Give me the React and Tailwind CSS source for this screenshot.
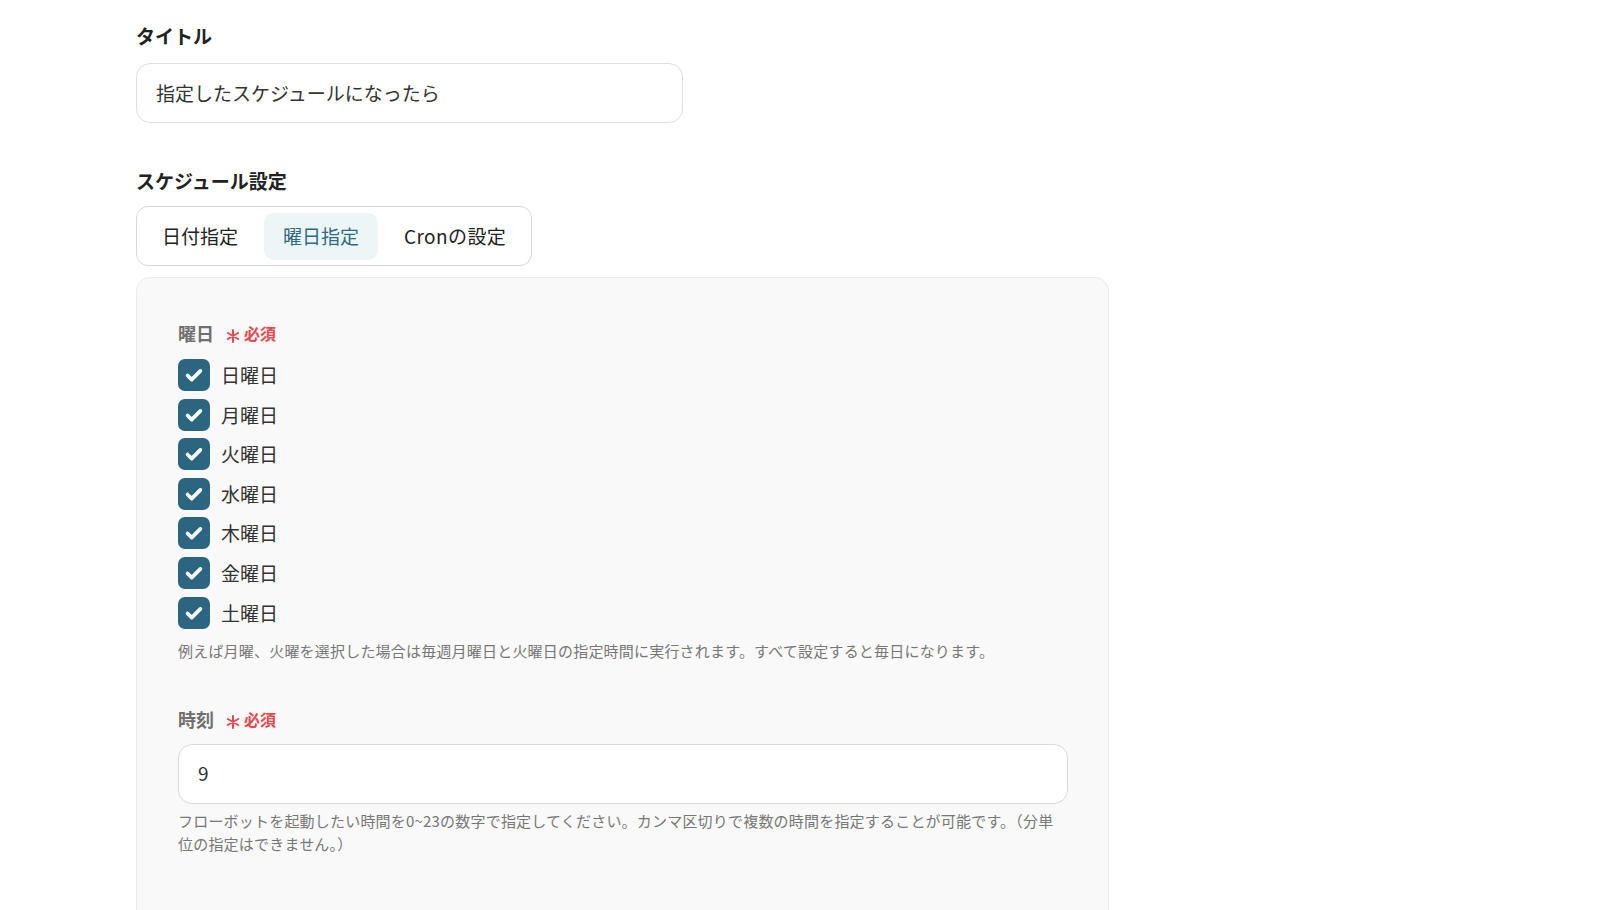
import React from 'react'

const days = ['日曜日', '月曜日', '火曜日', '水曜日', '木曜日', '金曜日', '土曜日']

function CheckBox() {
  return (
    <span className="flex h-[32px] w-[32px] shrink-0 items-center justify-center rounded-[7px] bg-[#2c6580]">
      <svg width="22" height="22" viewBox="0 0 24 24" fill="none" stroke="white" strokeWidth="4" strokeLinecap="round" strokeLinejoin="round">
        <path d="M5 12.5l4.5 4.5L19 7.5" />
      </svg>
    </span>
  )
}

function Required() {
  return (
    <span className="ml-[12px] flex items-center text-[16px] font-bold text-[#e5484d]">
      <svg width="14" height="14" viewBox="0 0 14 14" className="mr-[4px] translate-y-[3px]" stroke="#e5484d" strokeWidth="2" strokeLinecap="round">
        <path d="M7 1v12M1.8 4l10.4 6M1.8 10l10.4-6" />
      </svg>
      必須
    </span>
  )
}

export default function App() {
  return (
    <div className="min-h-[910px] w-full overflow-hidden bg-white pl-[136px] pt-[22px] text-[#222]" style={{ fontFamily: '"Noto Sans CJK JP", "Noto Sans", sans-serif' }}>
      <div className="text-[19px] font-bold leading-[28px]">タイトル</div>
      <div className="mt-[13px] flex h-[60px] w-[547px] items-center rounded-[14px] border border-[#dcdfe3] px-[19px] text-[19px] text-[#333]">
        指定したスケジュールになったら
      </div>

      <div className="mt-[44px] text-[19px] font-bold leading-[28px]">スケジュール設定</div>
      <div className="mt-[11px] flex h-[60px] w-fit items-center gap-[7px] whitespace-nowrap rounded-[12px] border border-[#d6d9dc] px-[6px] text-[19px]">
        <div className="flex h-[47px] items-center px-[19px] text-[#222]">日付指定</div>
        <div className="flex h-[47px] items-center rounded-[10px] bg-[#eef5f7] px-[19px] text-[#2f6b85]">曜日指定</div>
        <div className="flex h-[47px] items-center px-[19px] tracking-[0.4px] text-[#222]">Cronの設定</div>
      </div>

      <div className="mt-[11px] w-[973px] rounded-t-[14px] border border-[#ebebeb] bg-[#f9f9f9] px-[41px] pb-[60px] pt-[41px]">
        <div className="flex items-center">
          <span className="text-[18px] font-bold leading-[28px] text-[#6f6f6f]">曜日</span>
          <Required />
        </div>
        <div className="mt-[12px] flex flex-col gap-[7.6px]">
          {days.map(d => (
            <div key={d} className="flex items-center">
              <CheckBox />
              <span className="ml-[11px] text-[19px] leading-[32px] text-[#333]">{d}</span>
            </div>
          ))}
        </div>
        <div className="mt-[11px] text-[15px] leading-[22px] tracking-[0.2px] text-[#777]">
          例えば月曜、火曜を選択した場合は毎週月曜日と火曜日の指定時間に実行されます。すべて設定すると毎日になります。
        </div>

        <div className="mt-[43px] flex items-center">
          <span className="text-[18px] font-bold leading-[28px] text-[#6f6f6f]">時刻</span>
          <Required />
        </div>
        <div className="mt-[11px] flex h-[60px] w-[890px] items-center rounded-[14px] border border-[#d5d9de] bg-white px-[19px] text-[19px] text-[#333]">
          9
        </div>
        <div className="mt-[5px] w-[890px] text-[15px] leading-[23px] tracking-[0.2px] text-[#777]">
          フローボットを起動したい時間を0~23の数字で指定してください。カンマ区切りで複数の時間を指定することが可能です。（分単位の指定はできません。）
        </div>
      </div>
    </div>
  )
}
